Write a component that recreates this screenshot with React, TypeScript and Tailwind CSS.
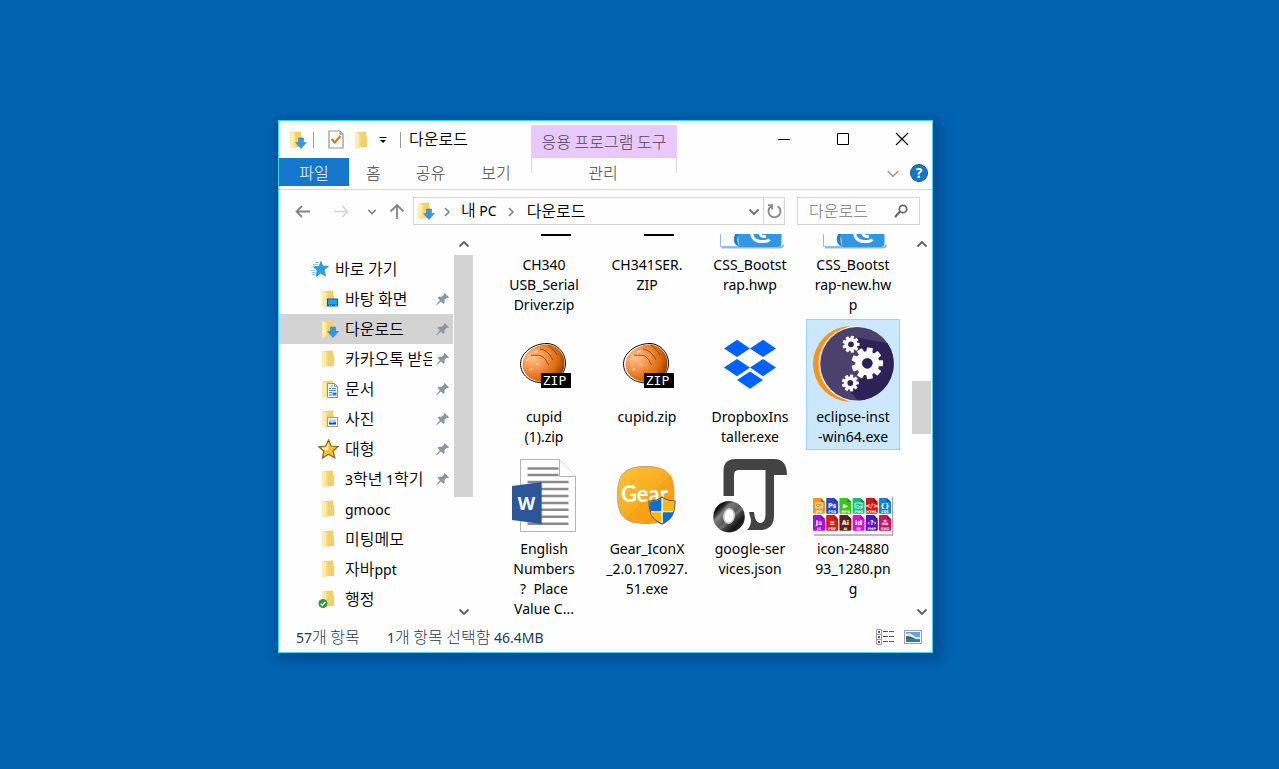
import { type ReactNode } from "react";

const latin = "font-['Noto_Sans','Noto_Sans_CJK_KR',sans-serif] text-sm font-normal";

/** Hangul is set at 16px; Latin words and digits inside it are set a size smaller. */
function Mixed({ text }: { text: string }) {
  return (
    <>
      {text.split(/([A-Za-z0-9.]+)/).map((part, i) =>
        i % 2 ? (
          <span key={i} className={latin}>
            {part}
          </span>
        ) : (
          part
        ),
      )}
    </>
  );
}

type FolderKind = "plain" | "desktop" | "download" | "docs" | "photos" | "check";

function Folder({ kind = "plain" }: { kind?: FolderKind }) {
  return (
    <svg viewBox="0 0 21 20" className="h-5 w-[21px] shrink-0" aria-hidden="true">
      <path d="M4 2.500 14 1.500h1V6l1 .6V17H10L4 18Z" fill="#f4d06c" />
      <path d="M4 2l4.500 1.500v13.800L5 19l-1-1Z" fill="#fdeeb0" />
      <path d="M8 3.500h1.500V17L6 18.500 8 16Z" fill="#f8dd8a" />
      {kind === "desktop" && (
        <>
          <rect x="9" y="9.500" width="11" height="8" fill="#0a5c9c" />
          <rect x="10" y="10.500" width="9" height="5" fill="#1aa0fb" />
          <path d="M11 16.600h1M13 16.600h1M17 16.600h2" stroke="#8fd0ff" strokeWidth=".8" />
        </>
      )}
      {kind === "download" && <path d="M12.500 8h5v4.500H20.500L15 18.500 9.500 12.500h3Z" fill="#3a94e6" stroke="#2779c4" strokeWidth=".5" />}
      {kind === "docs" && (
        <>
          <path d="M9.500 4.500h7l3 3v11h-10Z" fill="#fff" stroke="#8a9199" />
          <path d="M16.500 4.500v3h3" fill="none" stroke="#8a9199" />
          <path d="M13 7h2M11 9.500h2M14 9.500h4M11 11.500h7M11 13.500h3M11 16h3" stroke="#3a8ccc" />
          <rect x="14.500" y="13.500" width="4" height="3" fill="#3c7f8e" />
        </>
      )}
      {kind === "photos" && (
        <>
          <rect x="9.500" y="8.500" width="10" height="9" fill="#fff" stroke="#9aa0a6" />
          <rect x="11" y="10.500" width="7" height="5" fill="#a7d6f5" />
          <path d="M11 13l3 1 4-1v2.500h-7Z" fill="#24527a" />
        </>
      )}
      {kind === "check" && (
        <>
          <circle cx="5" cy="14.500" r="4.500" fill="#2f9a3c" />
          <path d="m2.800 14.600 1.600 1.800 3-3.500" fill="none" stroke="#fff" strokeWidth="1.400" />
        </>
      )}
    </svg>
  );
}

function YellowStar() {
  return (
    <svg viewBox="0 0 21 20" className="h-5 w-[21px] shrink-0" aria-hidden="true">
      <path d="m10.500 1 2.700 6 6.800.6-5 4.400 1.800 6.800-6.300-3.600-6 3.800 1.300-7L.8 7.800l6.900-.8Z" fill="#f5c435" stroke="#8a6418" strokeWidth="1.200" />
      <path d="m10.300 3.500-1.800 4.700-5 .7 3.800 2.800 3-1Z" fill="#fff0a8" />
    </svg>
  );
}

function BlueStar() {
  return (
    <svg viewBox="0 0 18 18" className="size-[18px] shrink-0" aria-hidden="true">
      <path d="m10 1.500 1.800 4.700 5.700.100-4.400 3.700 1.400 6-4.700-3.100-4.500 3.500.9-6L2.500 6.800l5.600-.4Z" fill="#2f9dea" stroke="#1877bd" strokeWidth=".7" />
      <path d="M4 2.500h4M2 4.500h5M0 10.500h4M1 12.500h3.500M1 14.500h3" stroke="#8ecbf3" />
    </svg>
  );
}

function Pin() {
  return (
    <svg viewBox="0 0 14 14" className="size-3.5 shrink-0" aria-hidden="true">
      <path d="m8.500.8 4.700 4.600-1.500.6-1.200-.1-2 2.100.2 2.800-1.200 1.200-2.600-2.600L.7 13.300l-.5-.5 3.600-4.600L1.500 5.800l1.300-1.100 2.800.1 2.300-2Z" fill="#8b98a3" />
    </svg>
  );
}

function Chevron({ dir, className }: { dir: "up" | "down" | "right"; className: string }) {
  const d = { up: "M1.500 7.500 6 3l4.500 4.500", down: "M1.500 3.500 6 8l4.500-4.500", right: "M4 2l4 4-4 4" }[dir];
  return (
    <svg viewBox="0 0 12 11" className={className} fill="none" stroke="currentColor" aria-hidden="true">
      <path d={d} />
    </svg>
  );
}

function ZipIcon({ labelled = true }: { labelled?: boolean }) {
  return (
    <>
      <defs>
        <radialGradient id="bun" cx=".25" cy=".35" r=".85">
          <stop offset="0" stopColor="#ffc48a" />
          <stop offset=".35" stopColor="#f8944a" />
          <stop offset=".7" stopColor="#d9690c" />
          <stop offset="1" stopColor="#7a3404" />
        </radialGradient>
      </defs>
      <path d="M49 23.500c8 0 18 7 18.500 19 .3 9-6 20-21 20.500C32 63 22.500 55 22.500 43.500 23 32 36 23.500 49 23.500Z" fill="#fff" stroke="#000" />
      <path d="M49 24.500c8 0 17 7 17.500 18 .3 9-5 19-20 19.500C33 62 24 54 24.500 43.500 25 33 37 24.500 49 24.500Z" fill="url(#bun)" />
      <path d="M33 35c5 1 8-1 12 2s3 5 6 8M42 29c6 1 10 5 13 11M50 25c4 3 7 6 9 10" fill="none" stroke="#7d4a10" strokeWidth=".9" />
      <path d="M28 41l3-2M31 50l3-1M38 44l4 1M36 32l4-1" stroke="#ffd4a4" strokeWidth="1.500" />
      <rect x="43" y="53" width="30" height="15" fill="#000" />
      {labelled && (
        <text x="56.500" y="65" fill="#fff" fontSize="13" textAnchor="middle" className="font-['DejaVu_Sans_Mono',monospace]">
          ZIP
        </text>
      )}
    </>
  );
}

function HwpIcon() {
  return (
    <>
      <path d="M18 79.500h58q3 0 3-3" fill="none" stroke="#9fb4c4" strokeWidth="2" />
      <path d="M16.500 20h61v55q0 4-4 4h-57Z" fill="#2f97e3" />
      <path d="M16.500 20H33v43l2 15.500H16.500Z" fill="#fbfdff" stroke="#8cc3ea" />
      <path d="M37 62q-6 7-2 16.500-6-2-5-9 1-5 4-7.500Z" fill="#2280cc" />
      <path d="M47.500 60q-1 13 9 13.500 7 .3 9-2M56 64q-.5 5 6 4.500" fill="none" stroke="#fff" strokeWidth="3" />
    </>
  );
}

function DropboxIcon() {
  return (
    <g fill="#0061fe">
      <path d="m33 19.700 13 8.700-13 8.600-13-8.600ZM59 19.700l13 8.700-13 8.600-13-8.600ZM33 39l13 8.600-13 8.700-13-8.700ZM59 39l13 8.600-13 8.700-13-8.700Z" />
      <path d="m46 51.500 13 8.500-13 8.700L33 60Z" />
    </g>
  );
}

function Cog({ x, y, r, hole }: { x: number; y: number; r: number; hole: string }) {
  return (
    <g transform={`translate(${x} ${y})`}>
      {[0, 40, 80, 120, 160, 200, 240, 280, 320].map((a) => (
        <rect key={a} x={-r * 0.19} y={-r} width={r * 0.38} height={r * 0.5} rx={r * 0.06} fill="#fff" transform={`rotate(${a + 10})`} />
      ))}
      <circle r={r * 0.76} fill="#fff" />
      <circle r={r * 0.34} fill={hole} />
    </g>
  );
}

function EclipseIcon() {
  return (
    <>
      <defs>
        <clipPath id="disc">
          <circle cx="50" cy="43.700" r="36.800" />
        </clipPath>
      </defs>
      <path d="M44 6a38 38 0 1 0 0 76A39.500 39.500 0 0 1 44 6Z" fill="#f7941e" />
      <circle cx="49" cy="43.700" r="37.400" fill="#f4f7fb" />
      <g clipPath="url(#disc)">
        <rect x="12" y="5" width="78" height="78" fill="#4b416c" />
        <path d="m48 17 42 8v60H56L42 71l14-15Z" fill="#2c2255" />
      </g>
      <Cog x={44} y={24.3} r={8.5} hole="#2c2255" />
      <Cog x={60.3} y={43.3} r={15.8} hole="#2c2255" />
      <Cog x={43.3} y={63} r={8.5} hole="#2c2255" />
    </>
  );
}

function WordIcon() {
  return (
    <>
      <path d="M22.500 7.500h39l16 17V79.500h-55Z" fill="#fff" stroke="#b4b4b4" />
      <path d="M61.500 7.500v17h16" fill="#fff" stroke="#b4b4b4" />
      <path d="M29.500 16.500h31M29.500 23h31M29.500 30h41M43 37h27.500M43 44h27.500M43 51h27.500M43 57.700h27.500M43 64.700h27.500M29.500 71.700h41" stroke="#8a8a8a" strokeWidth="2.600" />
      <path d="m14 34 29.700-4v42L14 68Z" fill="#2b579a" />
      <text x="28.500" y="58" fill="#fff" fontSize="18" textAnchor="middle" className="font-['Noto_Sans',sans-serif] font-bold">
        W
      </text>
    </>
  );
}

function GearIcon() {
  return (
    <>
      <defs>
        <linearGradient id="amber" x1="0" y1="0" x2="1" y2="1">
          <stop offset="0" stopColor="#fcc233" />
          <stop offset="1" stopColor="#f79a0e" />
        </linearGradient>
      </defs>
      <path d="M45 14.500c20 0 28 7 28 28.500s-7 28.500-28 28.500-28.500-7-28.500-28.500 8-28.500 28.500-28.500Z" fill="url(#amber)" stroke="#b9a37e" />
      <path d="M24 67 70 22q4 10 3 22-1 20-15 26-18 4-34-3Z" fill="#f79c12" opacity=".6" />
      <text x="43.500" y="50" fill="#fff" fontSize="22" textAnchor="middle" className="font-[Lato,sans-serif] font-bold">
        Gear
      </text>
      <path d="M61 45c3 2.500 8 4 13 4 0 12-3 18-13 23-10-5-13-11-13-23 5 0 10-1.500 13-4Z" fill="#fff" stroke="#555" strokeWidth="1.200" />
      <path d="M60.400 46.300v12.900H49.300q-.7-4-.6-9.500 7-.3 11.700-3.400ZM61.800 60.200h11q-2.500 7.200-11 10.900Z" fill="#0a6fd1" />
      <path d="M61.800 46.300v12.900H72.700q.7-4 .6-9.500-7-.3-11.500-3.400ZM60.400 60.200h-11q2.500 7.200 11 10.900Z" fill="#fbb612" />
    </>
  );
}

function JsonIcon() {
  return (
    <>
      <defs>
        <linearGradient id="steel" x1="0" y1="0" x2="1" y2="1">
          <stop offset="0" stopColor="#111" />
          <stop offset=".2" stopColor="#111" />
          <stop offset=".35" stopColor="#777" />
          <stop offset=".6" stopColor="#4a4a4a" />
          <stop offset=".75" stopColor="#161616" />
          <stop offset="1" stopColor="#444" />
        </linearGradient>
      </defs>
      <path d="M19.500 44V19q0-12 12-12H70q13 0 13 16H70v40q0 15-14 15H43q4-4 4-10l-2-8h5q1 11 6 11 5.500 0 5.500-9V18H35q-5 0-5 5v21Z" fill="#434343" />
      <circle cx="25" cy="64.700" r="15.800" fill="url(#steel)" />
      <path d="m11 69 15-17M16 77l22-21" stroke="#999" strokeWidth="3" opacity=".4" />
      <ellipse cx="25" cy="64" rx="5.200" ry="7.200" fill="#fff" stroke="#c8c8c8" strokeWidth="1.500" transform="rotate(8 25 64)" />
    </>
  );
}

const sheets = [
  ["#f7941e", "", "JPG"],
  ["#2b45c4", "Ps", "PSD"],
  ["#3cc41c", "▶", "MP4"],
  ["#12bd82", "", "PNG"],
  ["#d41313", "</>", "HTML"],
  ["#1684cf", "{}", "CSS"],
  ["#a310e0", "Js", "JS"],
  ["#d81b12", "≡", "PDF"],
  ["#5c2412", "Ai", "AI"],
  ["#e010dd", "Id", "ID"],
  ["#5a10c2", "‹?›", "PHP"],
  ["#c81568", "⁂", "SVG"],
];

function SheetsIcon() {
  return (
    <>
      <path d="M85.500 44.500v38.500H7" fill="none" stroke="#a8a8a8" strokeWidth="1.500" />
      <rect x="5" y="44" width="79.500" height="38" fill="#fff" />
      {sheets.map(([fill, mark, name], i) => {
        const x = 6 + (i % 6) * 13.2;
        const y = i < 6 ? 46 : 63;
        return (
          <g key={name} transform={`translate(${x} ${y})`}>
            <path d="M0 1q0-1 1-1h7l4 4v10.800q0 1-1 1H1q-1 0-1-1Z" fill={fill} />
            <path d="M8 0v4h4Z" fill="#000" opacity=".3" />
            {mark ? (
              <text x="6" y="10" fill="#fff" fontSize="6.500" textAnchor="middle" className="font-['DejaVu_Sans',sans-serif] font-bold">
                {mark}
              </text>
            ) : (
              <path d="M2.500 5h7v5h-7Zm0 4 2.500-2 2 2 1-1 1.500 1" fill="none" stroke="#fff" strokeWidth=".8" />
            )}
            <text x="6" y="14.800" fill="#fff" fontSize="3.500" textAnchor="middle" className="font-['DejaVu_Sans',sans-serif] font-bold">
              {name}
            </text>
          </g>
        );
      })}
    </>
  );
}

const files: { lines: string[]; icon: ReactNode; selected?: boolean }[] = [
  { lines: ["CH340", "USB_Serial", "Driver.zip"], icon: <ZipIcon labelled={false} /> },
  { lines: ["CH341SER.", "ZIP"], icon: <ZipIcon labelled={false} /> },
  { lines: ["CSS_Bootst", "rap.hwp"], icon: <HwpIcon /> },
  { lines: ["CSS_Bootst", "rap-new.hw", "p"], icon: <HwpIcon /> },
  { lines: ["cupid", "(1).zip"], icon: <ZipIcon /> },
  { lines: ["cupid.zip"], icon: <ZipIcon /> },
  { lines: ["DropboxIns", "taller.exe"], icon: <DropboxIcon /> },
  { lines: ["eclipse-inst", "-win64.exe"], icon: <EclipseIcon />, selected: true },
  { lines: ["English", "Numbers", "?  Place", "Value C..."], icon: <WordIcon /> },
  { lines: ["Gear_IconX", "_2.0.170927.", "51.exe"], icon: <GearIcon /> },
  { lines: ["google-ser", "vices.json"], icon: <JsonIcon /> },
  { lines: ["icon-24880", "93_1280.pn", "g"], icon: <SheetsIcon /> },
];

const places: { name: string; icon: ReactNode; pinned?: boolean; current?: boolean }[] = [
  { name: "바탕 화면", icon: <Folder kind="desktop" />, pinned: true },
  { name: "다운로드", icon: <Folder kind="download" />, pinned: true, current: true },
  { name: "카카오톡 받은", icon: <Folder />, pinned: true },
  { name: "문서", icon: <Folder kind="docs" />, pinned: true },
  { name: "사진", icon: <Folder kind="photos" />, pinned: true },
  { name: "대형", icon: <YellowStar />, pinned: true },
  { name: "3학년 1학기", icon: <Folder />, pinned: true },
  { name: "gmooc", icon: <Folder /> },
  { name: "미팅메모", icon: <Folder /> },
  { name: "자바ppt", icon: <Folder /> },
  { name: "행정", icon: <Folder kind="check" /> },
];

function Scrollbar({ thumb }: { thumb: string }) {
  return (
    <div className="mr-px flex w-[19px] shrink-0 flex-col items-center text-[#606060]">
      <button aria-label="위로 스크롤" className="flex h-[21px] w-full items-center justify-center">
        <Chevron dir="up" className="h-[11px] w-3 stroke-[1.800]" />
      </button>
      <div className="w-full flex-1">
        <div className={`w-full bg-[#d3d3d3] ${thumb}`} />
      </div>
      <button aria-label="아래로 스크롤" className="flex h-[21px] w-full items-center justify-center">
        <Chevron dir="down" className="h-[11px] w-3 stroke-[1.800]" />
      </button>
    </div>
  );
}

function TitleBar() {
  return (
    <header className="grid grid-cols-[252px_146px_1fr] grid-rows-[37px_31px] border-b border-[#d5d5d5]">
      <div className="flex items-center pl-[7px]">
        <Folder kind="download" />
        <span className="ml-1.5 h-4 w-px bg-[#9a9a9a]" />
        <button aria-label="속성" className="ml-3.5">
          <svg viewBox="0 0 16 19" className="h-[19px] w-4" aria-hidden="true">
            <path d="M1 1h11l3 3v14H1Z" fill="#fff" stroke="#8d9299" strokeWidth="1.200" />
            <path d="M12 1v3h3" fill="none" stroke="#8d9299" />
            <path d="m3.500 9 3.200 3.500L12.500 6" fill="none" stroke="#e86a14" strokeWidth="2" />
          </svg>
        </button>
        <button aria-label="새 폴더" className="ml-[7px]">
          <Folder />
        </button>
        <button aria-label="빠른 실행 도구 모음" className="ml-[7px]">
          <svg viewBox="0 0 8 8" className="size-2" aria-hidden="true">
            <path d="M.5 1.500h7" stroke="#000" />
            <path d="M1 4h6L4 7Z" fill="#000" />
          </svg>
        </button>
        <span className="ml-[13px] h-4 w-px bg-[#9a9a9a]" />
        <h1 className="ml-2 pb-[3px] text-base leading-5 font-[350] whitespace-nowrap">다운로드</h1>
      </div>
      <div className="mt-1 flex items-center justify-center bg-[#e9c8fb] pb-0.5 text-base whitespace-nowrap text-[#4d4453]">응용 프로그램 도구</div>
      <div className="flex items-center justify-end gap-[45px] pr-[23px] pb-0.5">
        <button aria-label="최소화">
          <svg viewBox="0 0 14 14" className="size-3.5" aria-hidden="true">
            <path d="M1 7.500h12" stroke="#000" />
          </svg>
        </button>
        <button aria-label="최대화">
          <svg viewBox="0 0 14 14" className="size-3.5" aria-hidden="true">
            <path d="M1.500 1.500h11v11h-11Z" fill="none" stroke="#000" />
          </svg>
        </button>
        <button aria-label="닫기">
          <svg viewBox="0 0 14 14" className="size-3.5" aria-hidden="true">
            <path d="m1 1 12 12M13 1 1 13" stroke="#000" strokeWidth="1.100" />
          </svg>
        </button>
      </div>
      <nav className="flex items-start text-base leading-7 text-[#404040]">
        <button className="h-7 w-[70px] bg-[#1477cc] text-white">파일</button>
        <button className="ml-[17px]">홈</button>
        <button className="ml-[35px]">공유</button>
        <button className="ml-9">보기</button>
      </nav>
      <div className="flex h-[15px] justify-center border-x border-[#d5d5d5]">
        <button className="h-7 pr-0.5 text-base leading-7 text-[#404040]">관리</button>
      </div>
      <div className="flex h-[30px] items-center justify-end gap-2.5 pr-1">
        <button aria-label="리본 최소화" className="text-[#a0a0a0]">
          <Chevron dir="down" className="h-[13px] w-3.5 stroke-[1.400]" />
        </button>
        <button aria-label="도움말" className="size-[18px] rounded-full border border-[#0b57a0] bg-[#1477cc] text-center font-['Open_Sans',sans-serif] text-sm leading-4 font-bold text-white">
          ?
        </button>
      </div>
    </header>
  );
}

function AddressRow() {
  return (
    <div className="flex h-11 items-center pr-3 pb-0.5 pl-4">
      <button aria-label="뒤로">
        <svg viewBox="0 0 16 14" className="h-3.5 w-4" fill="none" stroke="#848484" strokeWidth="1.800" aria-hidden="true">
          <path d="M15 7.500H1.500M7 2 1.500 7.500 7 13" />
        </svg>
      </button>
      <button aria-label="앞으로" className="ml-[22px]">
        <svg viewBox="0 0 16 14" className="h-3.5 w-4" fill="none" stroke="#d2d2d2" strokeWidth="1.500" aria-hidden="true">
          <path d="M1 7.500h13.500M9.500 2 14.500 7.500 9.500 13" />
        </svg>
      </button>
      <button aria-label="최근 위치" className="ml-[18px] text-[#858585]">
        <Chevron dir="down" className="h-[9px] w-2.5 stroke-2" />
      </button>
      <button aria-label="위로" className="ml-3">
        <svg viewBox="0 0 16 16" className="size-4" fill="none" stroke="#848484" strokeWidth="1.800" aria-hidden="true">
          <path d="M8 16V2.500M1.500 8.500 8 2 14.500 8.500" />
        </svg>
      </button>
      <div className="ml-2 flex h-7 flex-1 items-center border border-[#d5d5d5]">
        <Folder kind="download" />
        <Chevron dir="right" className="ml-1.5 h-[11px] w-3 stroke-[1.600] text-[#858585]" />
        <a href="#pc" className="ml-2 pb-0.5 text-base leading-5 font-[350] whitespace-nowrap">
          <Mixed text="내 PC" />
        </a>
        <Chevron dir="right" className="mx-2 h-[11px] w-3 stroke-[1.600] text-[#858585]" />
        <a href="#downloads" className="flex-1 pb-0.5 pl-0.5 text-base leading-5 font-[350] whitespace-nowrap">
          다운로드
        </a>
        <button aria-label="이전 위치" className="mr-[3px] text-[#777]">
          <Chevron dir="down" className="h-[11px] w-3 stroke-2" />
        </button>
        <button aria-label="새로 고침" className="flex h-full w-[21px] items-center justify-center border-l border-[#d5d5d5]">
          <svg viewBox="0 0 16 16" className="size-4" fill="none" stroke="#8a8a8a" strokeWidth="1.900" aria-hidden="true">
            <path d="M11.500 3.200A6 6 0 1 1 5.300 3.300M2 2.200h4.200v4.300" />
          </svg>
        </button>
      </div>
      <label className="ml-3 flex h-7 w-[123px] items-center border border-[#d5d5d5] pr-[11px] pl-[11px]">
        <input aria-label="다운로드 검색" placeholder="다운로드" className="w-full min-w-0 flex-1 bg-transparent pb-0.5 text-base leading-5 outline-none placeholder:text-[#757575]" />
        <svg viewBox="0 0 14 14" className="size-3.5 shrink-0" fill="none" stroke="#666" strokeWidth="2" aria-hidden="true">
          <circle cx="9" cy="5" r="3.700" strokeWidth="1.700" />
          <path d="M6 7.500 1 13" />
        </svg>
      </label>
    </div>
  );
}

function Sidebar() {
  return (
    <nav className="flex w-[175px] shrink-0 flex-col pt-5 pr-px text-base font-[350]">
      <a href="#quick" className="flex h-[30px] items-center gap-1.5 pl-8">
        <BlueStar />
        <span className="pb-0.5">바로 가기</span>
      </a>
      {places.map((p) => (
        <a key={p.name} href={`#${p.name}`} className={`flex h-[30px] items-center pr-[3px] pl-[39px] ${p.current ? "bg-[#d3d3d3]" : ""}`}>
          {p.icon}
          <span className="ml-1.5 flex-1 overflow-hidden pb-0.5 whitespace-nowrap">
            <Mixed text={p.name} />
          </span>
          {p.pinned && (
            <span className="ml-1">
              <Pin />
            </span>
          )}
        </a>
      ))}
    </nav>
  );
}

function StatusBar() {
  return (
    <footer className="flex h-[30px] items-center pr-2.5 pl-[17px] text-base text-[#1e395b]">
      <span className="w-[91px] pb-0.5">
        <Mixed text="57개 항목" />
      </span>
      <span className="flex-1 pb-0.5">
        <Mixed text="1개 항목 선택함 46.4MB" />
      </span>
      <button aria-label="자세히">
        <svg viewBox="0 0 18 16" className="h-4 w-[18px]" aria-hidden="true">
          <path d="M.5.5h5v15h-5ZM.5 5.500h5M.5 10.500h5" fill="#fff" stroke="#9b9b9b" />
          <path d="M7 2.500h5M13 2.500h5M7 7.500h5M13 7.500h5M7 12.500h5M13 12.500h5" stroke="#555" />
          <path d="M2 2h2v2H2Z" fill="#247a73" />
          <path d="M2 7h2v2H2Z" fill="#2a5db5" />
          <path d="M2 12h2v2H2Z" fill="#d02424" />
        </svg>
      </button>
      <button aria-label="큰 아이콘" className="ml-2.5">
        <svg viewBox="0 0 18 14" className="h-3.5 w-[18px]" aria-hidden="true">
          <rect x=".5" y=".5" width="17" height="13" fill="#fff" stroke="#a0a0a0" />
          <rect x="2" y="2" width="14" height="10" fill="#5fa3ea" />
          <path d="M2 4q4-2 7 1t7 2v2H2Z" fill="#d9effc" />
          <path d="m2 6 4 .5 7 3H2Z" fill="#2e6b4e" />
          <path d="M2 9.500h14V12H2Z" fill="#2f72b8" />
        </svg>
      </button>
    </footer>
  );
}

export default function App() {
  return (
    <main className="min-h-screen bg-[#0063b1] px-[278px] pt-[120px] pb-12 font-['Noto_Sans_CJK_KR',sans-serif] font-light text-black">
      <section className="w-[655px] border border-[#45d3ee] bg-[#fefefe] shadow-[3px_3px_10px_5px_rgba(0,30,80,0.280)]">
        <TitleBar />
        <AddressRow />
        <div className="flex h-[388px] overflow-hidden">
          <Sidebar />
          <Scrollbar thumb="h-[242px]" />
          <div className="flex-1 overflow-hidden pl-[23px]">
            <ul className="-mt-[67px] grid grid-cols-[repeat(4,94px)] items-start gap-x-[9px] gap-y-px">
              {files.map((f) => (
                <li key={f.lines.join("")}>
                  <button className={`w-full border pb-0.5 ${f.selected ? "border-[#99d1ff] bg-[#cce8ff]" : "border-transparent"}`}>
                    <svg viewBox="0 0 92 87" className="h-[87px] w-full" aria-hidden="true">
                      {f.icon}
                    </svg>
                    <span className={`block leading-5 ${latin}`}>
                      {f.lines.map((l) => (
                        <span key={l} className="block h-5 leading-5 whitespace-pre">
                          {l}
                        </span>
                      ))}
                    </span>
                  </button>
                </li>
              ))}
            </ul>
          </div>
          <Scrollbar thumb="mt-[126px] h-[53px]" />
        </div>
        <StatusBar />
      </section>
    </main>
  );
}
